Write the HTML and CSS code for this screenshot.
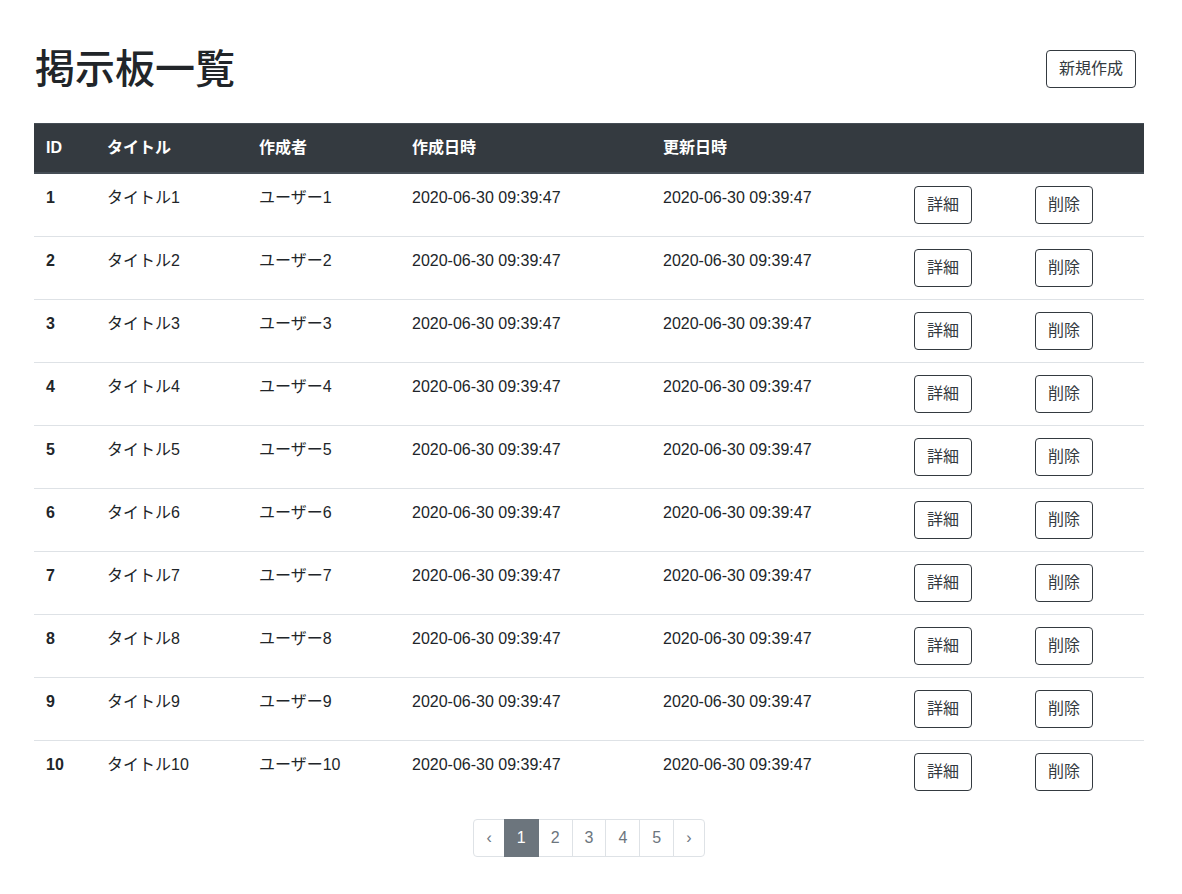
FILE: index.html
```html
<!DOCTYPE html>
<html lang="ja">
<head>
<meta charset="utf-8">
<title>掲示板一覧</title>
<link rel="stylesheet" href="styles.css">
</head>
<body>
<div class="container">
  <div class="page-head">
    <h1 class="title">掲示板一覧</h1>
    <button class="btn btn-new">新規作成</button>
  </div>
  <table class="board">
    <colgroup>
      <col class="c-id"><col class="c-title"><col class="c-user"><col class="c-date"><col class="c-date"><col class="c-btn"><col class="c-btn">
    </colgroup>
    <thead>
      <tr><th>ID</th><th>タイトル</th><th>作成者</th><th>作成日時</th><th>更新日時</th><th></th><th></th></tr>
    </thead>
    <tbody>
      <tr><td class="id">1</td><td>タイトル1</td><td>ユーザー1</td><td>2020-06-30 09:39:47</td><td>2020-06-30 09:39:47</td><td><button class="btn">詳細</button></td><td><button class="btn">削除</button></td></tr>
      <tr><td class="id">2</td><td>タイトル2</td><td>ユーザー2</td><td>2020-06-30 09:39:47</td><td>2020-06-30 09:39:47</td><td><button class="btn">詳細</button></td><td><button class="btn">削除</button></td></tr>
      <tr><td class="id">3</td><td>タイトル3</td><td>ユーザー3</td><td>2020-06-30 09:39:47</td><td>2020-06-30 09:39:47</td><td><button class="btn">詳細</button></td><td><button class="btn">削除</button></td></tr>
      <tr><td class="id">4</td><td>タイトル4</td><td>ユーザー4</td><td>2020-06-30 09:39:47</td><td>2020-06-30 09:39:47</td><td><button class="btn">詳細</button></td><td><button class="btn">削除</button></td></tr>
      <tr><td class="id">5</td><td>タイトル5</td><td>ユーザー5</td><td>2020-06-30 09:39:47</td><td>2020-06-30 09:39:47</td><td><button class="btn">詳細</button></td><td><button class="btn">削除</button></td></tr>
      <tr><td class="id">6</td><td>タイトル6</td><td>ユーザー6</td><td>2020-06-30 09:39:47</td><td>2020-06-30 09:39:47</td><td><button class="btn">詳細</button></td><td><button class="btn">削除</button></td></tr>
      <tr><td class="id">7</td><td>タイトル7</td><td>ユーザー7</td><td>2020-06-30 09:39:47</td><td>2020-06-30 09:39:47</td><td><button class="btn">詳細</button></td><td><button class="btn">削除</button></td></tr>
      <tr><td class="id">8</td><td>タイトル8</td><td>ユーザー8</td><td>2020-06-30 09:39:47</td><td>2020-06-30 09:39:47</td><td><button class="btn">詳細</button></td><td><button class="btn">削除</button></td></tr>
      <tr><td class="id">9</td><td>タイトル9</td><td>ユーザー9</td><td>2020-06-30 09:39:47</td><td>2020-06-30 09:39:47</td><td><button class="btn">詳細</button></td><td><button class="btn">削除</button></td></tr>
      <tr><td class="id">10</td><td>タイトル10</td><td>ユーザー10</td><td>2020-06-30 09:39:47</td><td>2020-06-30 09:39:47</td><td><button class="btn">詳細</button></td><td><button class="btn">削除</button></td></tr>
    </tbody>
  </table>
  <nav class="pager">
    <ul class="pagination">
      <li class="page-item"><span class="page-link">‹</span></li>
      <li class="page-item active"><span class="page-link">1</span></li>
      <li class="page-item"><span class="page-link">2</span></li>
      <li class="page-item"><span class="page-link">3</span></li>
      <li class="page-item"><span class="page-link">4</span></li>
      <li class="page-item"><span class="page-link">5</span></li>
      <li class="page-item"><span class="page-link">›</span></li>
    </ul>
  </nav>
</div>
</body>
</html>
```
FILE: styles.css
```css
* { box-sizing: border-box; }
html, body {
  margin: 0;
  padding: 0;
  background: #fff;
}
body {
  font-family: "Liberation Sans", "Noto Sans CJK JP", sans-serif;
  font-size: 16px;
  line-height: 1.5;
  color: #212529;
}
.container {
  width: 1110px;
  margin-left: 34px;
}
.page-head {
  display: flex;
  align-items: center;
  justify-content: space-between;
  padding-top: 45px;
  margin-bottom: 30px;
}
.title {
  margin: 0;
  font-size: 40px;
  line-height: 48px;
  font-weight: 500;
  color: #212529;
  padding-left: 1px;
}
.btn {
  display: inline-block;
  font-family: "Liberation Sans", "Noto Sans CJK JP", sans-serif;
  font-size: 16px;
  line-height: 24px;
  padding: 6px 12px;
  background: #fff;
  color: #343a40;
  border: 1px solid #343a40;
  border-radius: 4px;
  cursor: pointer;
}
.btn-new {
  margin-right: 8px;
}
.board {
  width: 100%;
  border-collapse: collapse;
  table-layout: fixed;
  margin-bottom: 16px;
}
.c-id { width: 61px; }
.c-title { width: 152px; }
.c-user { width: 153px; }
.c-date { width: 251px; }
.c-btn { width: 121px; }
.board th {
  background: #343a40;
  color: #fff;
  text-align: left;
  font-weight: bold;
  padding: 12px;
  line-height: 24px;
  border-top: 1px solid #454d55;
  border-bottom: 2px solid #454d55;
}
.board td {
  padding: 12px;
  vertical-align: top;
  line-height: 24px;
  border-top: 1px solid #dee2e6;
}
.board tbody tr:first-child td {
  border-top: none;
}
.board td.id {
  font-weight: bold;
}
.pager {
  display: flex;
  justify-content: center;
}
.pagination {
  display: flex;
  list-style: none;
  margin: 0;
  padding: 0;
}
.page-item + .page-item {
  margin-left: -1px;
}
.page-link {
  display: block;
  padding: 8px 12px;
  line-height: 20px;
  color: #6c757d;
  background: #fff;
  border: 1px solid #dee2e6;
}
.page-item:first-child .page-link {
  border-radius: 4px 0 0 4px;
}
.page-item:last-child .page-link {
  border-radius: 0 4px 4px 0;
}
.page-item.active .page-link {
  background: #6c757d;
  border-color: #6c757d;
  color: #fff;
  position: relative;
  z-index: 1;
}
```
